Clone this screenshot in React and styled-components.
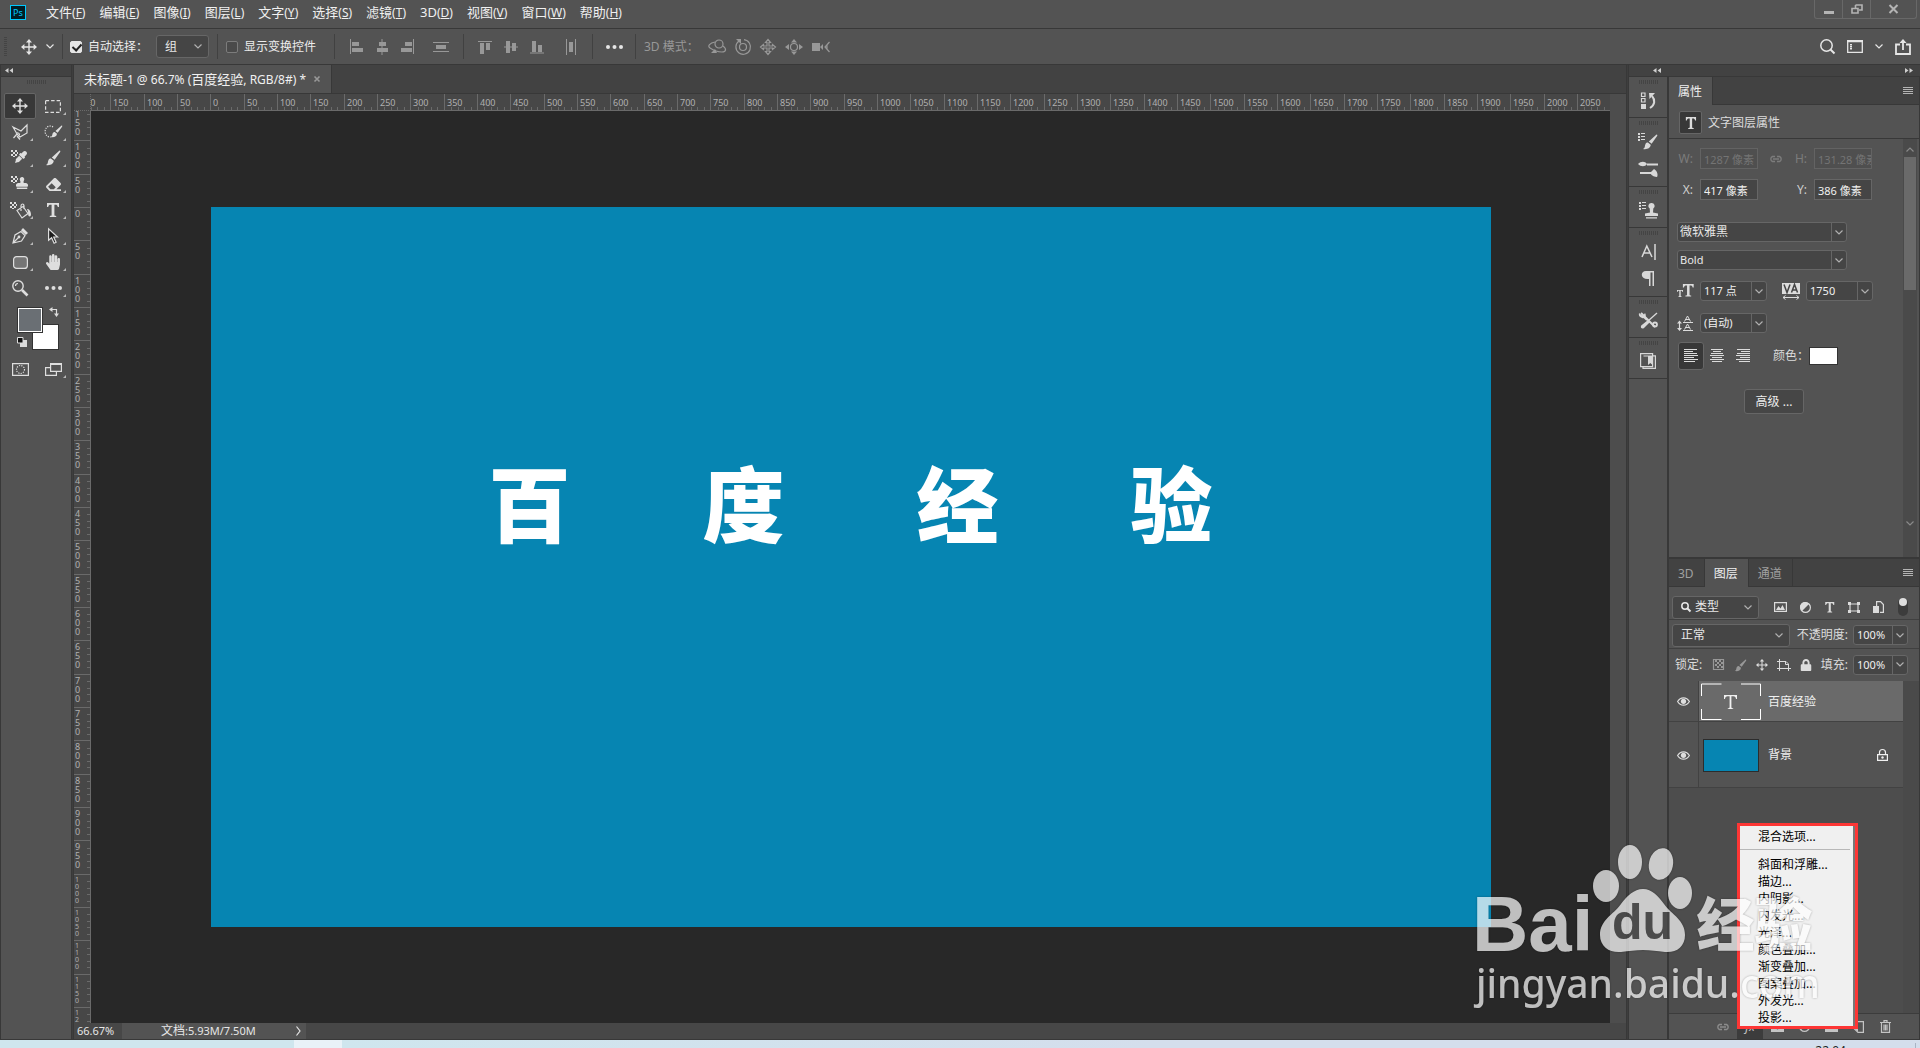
import React from 'react';
import styled, { createGlobalStyle, css } from 'styled-components';
import { FaHandPaper, FaEraser, FaEyeDropper, FaStamp, FaLock } from 'react-icons/fa';

const GlobalStyle = createGlobalStyle`
  * {
    box-sizing: border-box;
  }
  html, body, #root {
    height: 100%;
  }
  body {
    margin: 0;
    overflow: hidden;
    background: #535353;
    color: #dcdcdc;
    font: 12px/16px "Noto Sans", "Noto Sans CJK SC", sans-serif;
  }
  button, input, select {
    margin: 0;
    padding: 0;
    border: 0;
    color: inherit;
    font: inherit;
    background: none;
  }
  svg {
    display: block;
    flex: none;
  }
`;

const line = '#383838';

const Screen = styled.div`
  display: flex;
  flex-direction: column;
  height: 100vh;
  position: relative;
  overflow: hidden;
`;

const Glyph = styled.svg`
  width: ${({ $w }) => $w || 16}px;
  height: ${({ $h, $w }) => $h || $w || 16}px;
  fill: none;
  stroke: currentColor;
  stroke-width: 1.2;
  overflow: visible;

  .solid {
    fill: currentColor;
    stroke: none;
  }
`;

const Icon = ({ w = 16, h = w, children }) => (
  <Glyph $w={w} $h={h} viewBox={`0 0 ${w} ${h}`} aria-hidden='true'>
    {children}
  </Glyph>
);

const Chevron = () => (
  <Icon w={8} h={5}>
    <path d='M0.5 0.5l3.5 3.5 3.5-3.5' />
  </Icon>
);

/* ---------- menu bar ---------- */

const MenuBar = styled.header`
  display: flex;
  align-items: flex-start;
  height: 29px;
  padding-left: 10px;
  border-bottom: 1px solid ${line};
`;

const Logo = styled.div`
  display: grid;
  place-items: center;
  width: 16px;
  height: 15px;
  margin-top: 5px;
  border: 1px solid #00c8ff;
  background: #001d26;
  color: #00c8ff;
  font-size: 9px;
  line-height: 12px;
`;

const MenuList = styled.nav`
  display: flex;
  gap: 14px;
  margin: 2px auto 0 20px;
`;

const MenuItem = styled.button`
  color: #f0f0f0;
  font-size: 13px;
  line-height: 20px;
  white-space: nowrap;

  span {
    font-size: 12px;
  }
`;

const WindowButtons = styled.div`
  display: flex;
  margin-right: 3px;
  height: 19px;
  border: 1px solid #686868;
  border-top: 0;
  border-radius: 0 0 3px 3px;
  color: #b4b4b4;
`;

const WindowButton = styled.button`
  display: grid;
  place-items: center;
  width: ${({ $w }) => $w}px;

  & + & {
    border-left: 1px solid #686868;
  }
`;

/* ---------- options bar ---------- */

const OptionsBar = styled.div`
  display: flex;
  align-items: center;
  height: 36px;
  padding-left: 4px;
  border-bottom: 1px solid ${line};
`;

const Grip = styled.i`
  width: ${({ $tall }) => ($tall ? 3 : 19)}px;
  height: ${({ $tall }) => ($tall ? 20 : 4)}px;
  background: repeating-linear-gradient(
    ${({ $tall }) => ($tall ? '180deg' : '90deg')},
    #444 0 1px,
    transparent 1px 2px
  );
`;

const Separator = styled.i`
  width: 1px;
  height: 25px;
  background: #414141;
`;

const OptionGroup = styled.div`
  display: flex;
  align-items: center;
  justify-content: ${({ $align }) => $align || 'flex-start'};
  gap: ${({ $gap }) => $gap || 0}px;
  width: ${({ $w }) => $w}px;
  padding-left: ${({ $pad }) => $pad || 0}px;
  color: ${({ $dim }) => ($dim ? '#989898' : '#e6e6e6')};
`;

const BareButton = styled.button`
  display: grid;
  place-items: center;
  min-width: ${({ $w }) => $w || 14}px;
  height: ${({ $h }) => $h || 22}px;
  color: ${({ $dim }) => ($dim ? '#989898' : 'inherit')};
`;

const CheckLabel = styled.label`
  display: flex;
  align-items: center;
  gap: 6px;
  color: #ececec;
  white-space: nowrap;
`;

const Check = styled.input`
  appearance: none;
  width: 12px;
  height: 12px;
  border: 1px solid #7c7c7c;
  border-radius: 2px;
  background: #4a4a4a;

  &:checked {
    border-color: #e6e6e6;
    background: #e6e6e6;
  }
  &:checked::before {
    content: '';
    display: block;
    width: 4px;
    height: 7px;
    margin: 0 3px;
    border: solid #222;
    border-width: 0 2px 2px 0;
    transform: rotate(42deg);
  }
`;

const SelectShell = styled.div`
  display: grid;
  grid-template-columns: 1fr 20px;
  align-items: center;
  width: ${({ $w }) => $w}px;
  height: ${({ $h }) => $h || 20}px;
  border: 1px solid #666;
  border-radius: 3px;
  background: #454545;
  color: #e8e8e8;

  select {
    grid-area: 1 / 1 / 2 / 3;
    appearance: none;
    width: 100%;
    height: 100%;
    padding-left: ${({ $pad }) => $pad || 4}px;
    outline: 0;
    font-size: ${({ $small }) => ($small ? 11 : 12)}px;
  }
  > svg {
    grid-area: 1 / 2;
    justify-self: center;
    color: #b0b0b0;
    pointer-events: none;
  }
  ${({ $split }) =>
    $split &&
    css`
      grid-template-columns: 1fr 15px;
      &::after {
        content: '';
        grid-area: 1 / 2;
        height: 100%;
        border-left: 1px solid #666;
        pointer-events: none;
      }
    `}
`;

const Lens = styled.span`
  grid-area: 1 / 1;
  padding-left: 8px;
  pointer-events: none;
`;

const Select = ({ label, options, children, ...rest }) => (
  <SelectShell {...rest}>
    <select aria-label={label}>
      {options.map((option) => (
        <option key={option}>{option}</option>
      ))}
    </select>
    {children}
    <Chevron />
  </SelectShell>
);

const ComboShell = styled.div`
  display: flex;
  flex: none;
  width: ${({ $w }) => $w}px;
  height: 20px;
  border: 1px solid #666;
  border-radius: 3px;
  background: #454545;
  color: #f0f0f0;
  font-size: 11px;

  input {
    flex: 1;
    min-width: 0;
    padding-left: 3px;
    outline: 0;
  }
  button {
    display: grid;
    place-items: center;
    width: 15px;
    border-left: 1px solid #666;
    color: #b0b0b0;
  }
`;

const Combo = ({ label, value, w }) => (
  <ComboShell $w={w}>
    <input aria-label={label} defaultValue={value} />
    <button aria-label={`${label} ▾`}>
      <Chevron />
    </button>
  </ComboShell>
);

/* ---------- tools ---------- */

const Workspace = styled.main`
  display: flex;
  flex: 1;
  min-height: 0;
  border-left: 1px solid ${line};
  border-bottom: 1px solid ${line};
  background: #3e3e3e;
`;

const ToolColumn = styled.aside`
  width: 71px;
  margin-right: 1px;
  background: #535353;
  border-right: 1px solid ${line};
`;

const Collapse = styled.div`
  display: flex;
  align-items: center;
  justify-content: space-between;
  height: 12px;
  padding: ${({ $side }) => ($side ? '0 7px 0 24px' : '0 4px')};
  border-bottom: 1px solid ${line};
  background: #424242;
  color: #cfcfcf;
`;

const GripRow = styled.div`
  display: flex;
  justify-content: center;
  align-items: center;
  height: 10px;
`;

const ToolGrid = styled.div`
  display: grid;
  grid-template-columns: 32px 32px;
  grid-auto-rows: 26px;
  column-gap: 1px;
  padding: 6px 2px 0 3px;
`;

const Tool = styled.button`
  position: relative;
  display: grid;
  place-items: center;
  border-radius: 2px;
  color: #dedede;

  ${({ $active }) =>
    $active &&
    css`
      border: 1px solid #666;
      background: #383838;
    `}
  ${({ $more }) =>
    $more &&
    css`
      &::after {
        content: '';
        position: absolute;
        right: 3px;
        bottom: 4px;
        border: solid #b8b8b8;
        border-width: 0 0 3px 3px;
        border-left-color: transparent;
      }
    `}
`;

const Swatches = styled.div`
  display: grid;
  grid-template-columns: 15px 11px 16px;
  grid-template-rows: 17px 9px 17px;
  justify-content: center;
  margin: 6px 0 0 4px;
`;

const Swatch = styled.button`
  grid-area: ${({ $back }) => ($back ? '2 / 2 / 4 / 4' : '1 / 1 / 3 / 3')};
  z-index: ${({ $back }) => ($back ? 0 : 1)};
  border: 1px solid #333;
  background: ${({ $color }) => $color};
  box-shadow: ${({ $back }) => ($back ? 'none' : 'inset 0 0 0 1px #fff')};
`;

const SwapButton = styled(BareButton)`
  grid-area: 1 / 3;
  place-items: start end;
`;

const DefaultButton = styled(BareButton)`
  grid-area: 3 / 1;
  place-items: center start;
  height: 17px;
`;

const MoveArrows = () => (
  <Icon w={16}>
    <path d='M8 2v12M2 8h12' strokeWidth='1.4' />
    <path className='solid' d='M8 0l3 3.4H5zM8 16l3-3.4H5zM0 8l3.4-3v6zM16 8l-3.4-3v6z' />
  </Icon>
);

const Checker = () => (
  <path
    className='solid'
    d='M0 0h2v2h-2zM4 0h2v2h-2zM2 2h2v2h-2zM0 4h2v2h-2zM4 4h2v2h-2zM6 2h1v2h-1zM2 6h2v1h-2z'
  />
);

const BrushShape = () => (
  <path
    className='solid'
    d='M14.5 0.5c1 0 1 .8.6 1.6L9.6 9.8 6.8 7.6zM5.9 8.6l2.8 2.2c0 3.2-3.6 5-7.7 4.2 2.4-1.2 1.6-3 2.4-4.8.6-1.2 1.6-1.6 2.5-1.6z'
  />
);

const TypeShape = () => (
  <path
    className='solid'
    d='M1 0h12v4h-1.2c-.3-1.7-.9-2.3-2.6-2.3H8.4v10c0 .9.3 1.1 1.8 1.2V14H3.8v-1.1c1.5-.1 1.8-.3 1.8-1.2v-10H4.8C3.1 1.7 2.5 2.3 2.2 4H1z'
  />
);

const Dots = () => (
  <Icon w={17} h={4}>
    <g className='solid'>
      <circle cx='2' cy='2' r='2' />
      <circle cx='8.5' cy='2' r='2' />
      <circle cx='15' cy='2' r='2' />
    </g>
  </Icon>
);

const tools = [
  { label: '移动', active: true, art: <MoveArrows /> },
  {
    label: '选框',
    art: (
      <Icon w={16} h={13}>
        <rect x='0.6' y='0.6' width='14.8' height='11.8' strokeDasharray='3.5 2' />
      </Icon>
    ),
  },
  {
    label: '套索',
    art: (
      <Icon w={17}>
        <path d='M1 3l8 4 6-6v8l-7 4-3-3zM5 10l-3.5 4M5 12l3 3.5M4 9.5a2 1.5 0 1 1 3 2' />
      </Icon>
    ),
  },
  {
    label: '快速选择',
    art: (
      <Icon w={18} h={14}>
        <path d='M9 2A5 5.5 0 1 0 9 11' strokeDasharray='1.2 1.2' />
        <g transform='translate(6 0) scale(.8)'>
          <BrushShape />
        </g>
      </Icon>
    ),
  },
  {
    label: '吸管',
    art: (
      <Icon w={19} h={17}>
        <Checker />
        <FaEyeDropper x='4' y='1' width='15' height='15' stroke='none' />
      </Icon>
    ),
  },
  { label: '画笔', art: <Icon w={16}><BrushShape /></Icon> },
  {
    label: '图章',
    art: (
      <Icon w={19} h={16}>
        <Checker />
        <FaStamp x='5' y='1' width='14' height='15' stroke='none' />
      </Icon>
    ),
  },
  { label: '橡皮擦', art: <FaEraser size={15} /> },
  {
    label: '油漆桶',
    art: (
      <Icon w={21} h={17}>
        <Checker />
        <path d='M7 8.5l6-4 5 7-6 4.5zM11 9V4a1.5 2 0 0 1 3 0v3' />
        <path className='solid' d='M17 7c2 0 4 2 4 5.5a1.4 2 0 0 1-2.8 0c0-2-.2-3.5-1.2-5.5z' />
      </Icon>
    ),
  },
  { label: '文字', art: <Icon w={14}><TypeShape /></Icon> },
  {
    label: '钢笔',
    art: (
      <Icon w={16}>
        <path d='M1 15l2-8 6-3.5 4 4L9.5 13zM1 15l5.5-5.5' />
        <circle className='solid' cx='7' cy='9' r='1.4' />
        <path className='solid' d='M9 2.2L11 0l5 5-2.2 2z' />
      </Icon>
    ),
  },
  {
    label: '路径选择',
    art: (
      <Icon w={10} h={16}>
        <path d='M0.6 0.8v11.5l3-2.5 2.5 5.4 2-1-2.4-5.2h3.8z' fill='#1c1c1c' />
      </Icon>
    ),
  },
  {
    label: '圆角矩形',
    art: (
      <Icon w={15} h={13}>
        <rect x='0.6' y='0.6' width='13.8' height='11.8' rx='3' fill='#757575' />
      </Icon>
    ),
  },
  { label: '抓手', art: <FaHandPaper size={16} /> },
  {
    label: '缩放',
    plain: true,
    art: (
      <Icon w={16}>
        <circle cx='6' cy='6' r='5.2' strokeWidth='1.4' />
        <path d='M3.5 6a2.5 2.5 0 0 1 2.5-2.5' />
        <path d='M10 10l5.5 5.5' strokeWidth='2.6' />
      </Icon>
    ),
  },
  { label: '编辑工具栏', art: <Dots /> },
];

/* ---------- document ---------- */

const Document = styled.section`
  display: flex;
  flex: 1;
  flex-direction: column;
  min-width: 0;
  border-left: 1px solid ${line};
  border-right: 1px solid ${line};
`;

const TabBar = styled.div`
  display: flex;
  height: 29px;
  border-bottom: 1px solid ${line};
  background: #424242;
`;

const DocumentTab = styled.div`
  display: flex;
  align-items: center;
  gap: 7px;
  padding: 0 10px;
  border-right: 1px solid ${line};
  background: #535353;
  color: #f0f0f0;
  font-size: 13px;
  white-space: nowrap;

  span span {
    font-size: 12px;
  }
`;

const Stage = styled.div`
  display: grid;
  flex: 1;
  grid-template: 17px 1fr / 17px 1fr 16px;
  min-height: 0;
  background: #4d4d4d;
`;

const Corner = styled.div`
  border-right: 1px dotted #6a6a6a;
  border-bottom: 1px dotted #6a6a6a;
  background: #474747;
`;

const Ruler = styled.div`
  display: flex;
  flex-direction: ${({ $vertical }) => ($vertical ? 'column' : 'row')};
  overflow: hidden;
  border: solid #6a6a6a;
  border-width: ${({ $vertical }) => ($vertical ? '0 1px 0 0' : '0 0 1px')};
  background: #474747;
  color: #b0b0b0;
`;

const Mark = styled.div`
  display: flex;
  flex: none;
  flex-direction: ${({ $vertical }) => ($vertical ? 'row' : 'column')};
  justify-content: space-between;
  width: ${({ $vertical, $size }) => ($vertical ? 'auto' : `${$size}px`)};
  height: ${({ $vertical, $size }) => ($vertical ? `${$size}px` : 'auto')};
  border: solid #6a6a6a;
  border-width: ${({ $vertical }) => ($vertical ? '1px 0 0' : '0 0 0 1px')};

  &:first-child {
    margin: ${({ $vertical }) => ($vertical ? '-4px 0 0' : '0 0 0 -14px')};
  }
`;

const MarkLabel = styled.span`
  height: 13px;
  padding-left: 2px;
  font-size: ${({ $small }) => ($small ? 7 : 9)}px;
  line-height: 17px;

  ${({ $vertical, $small }) =>
    $vertical &&
    css`
      display: flex;
      flex-direction: column;
      height: auto;
      padding: 1px 0 0 1px;
      line-height: ${$small ? 7 : 9}px;
    `}
`;

const Ticks = styled.span`
  display: flex;
  flex-direction: ${({ $vertical }) => ($vertical ? 'column' : 'row')};
  ${({ $vertical }) => ($vertical ? 'width: 3px' : 'height: 3px')};

  i {
    flex: 1;
    border: solid #6a6a6a;
    border-width: ${({ $vertical }) => ($vertical ? '1px 0 0' : '0 0 0 1px')};
  }
  i:first-child {
    border-color: transparent;
  }
`;

const Pasteboard = styled.div`
  display: flex;
  align-items: center;
  justify-content: center;
  overflow: hidden;
  background: #282828;
`;

const Artboard = styled.div`
  display: flex;
  flex: none;
  justify-content: center;
  gap: 132px;
  width: 1280px;
  height: 720px;
  padding-top: 238px;
  background: #0685b2;
  color: #fff;
  font: 900 82px/112px "Noto Sans CJK SC", sans-serif;
`;

const StatusBar = styled.footer`
  display: flex;
  height: 16px;
  background: #474747;
  color: #e6e6e6;
  font-size: 11px;
`;

const Zoom = styled.input`
  width: 48px;
  padding-left: 3px;
`;

const DocInfo = styled.button`
  display: flex;
  align-items: center;
  justify-content: space-between;
  width: 184px;
  padding: 0 5px 0 39px;
  background: #535353;

  span {
    font-size: 12px;
  }
`;

const units = (from, count) =>
  Array.from({ length: count }, (_, i) => ({
    label: String(Math.abs(from + i * 50)),
    size: Math.round(((i + 1) * 100) / 3) - Math.round((i * 100) / 3),
  }));

const RulerScale = ({ from, count, vertical }) => (
  <Ruler $vertical={vertical}>
    {units(from, count).map(({ label, size }, i) => {
      const small = vertical && label.length > 3;
      return (
        <Mark key={i} $vertical={vertical} $size={size}>
          <MarkLabel $vertical={vertical} $small={small}>
            {vertical ? [...label].map((digit, n) => <span key={n}>{digit}</span>) : label}
          </MarkLabel>
          <Ticks $vertical={vertical}>
            <i /><i /><i /><i /><i />
          </Ticks>
        </Mark>
      );
    })}
  </Ruler>
);

/* ---------- side docks ---------- */

const Side = styled.aside`
  display: flex;
  flex: none;
  flex-direction: column;
  width: 292px;
  margin-left: 1px;
  border-left: 1px solid ${line};
`;

const SideBody = styled.div`
  display: flex;
  flex: 1;
  gap: 2px;
  min-height: 0;
  background: ${line};
`;

const IconDock = styled.div`
  flex: none;
  width: 38px;
  background: #535353;
`;

const DockGroup = styled.div`
  display: flex;
  flex-direction: column;
  align-items: center;
  padding-bottom: 4px;
  border-bottom: 1px solid ${line};
  color: #d8d8d8;
`;

const Panels = styled.div`
  display: flex;
  flex: 1;
  flex-direction: column;
  gap: 2px;
  min-width: 0;
  padding-right: 1px;
`;

const Panel = styled.section`
  display: flex;
  flex: 1;
  flex-direction: column;
  min-height: 0;
  position: relative;
  background: #535353;
`;

const PanelTabs = styled.div`
  display: flex;
  align-items: center;
  height: 28px;
  padding-right: 4px;
  box-shadow: inset 0 -1px ${line};
  background: #424242;
`;

const PanelTab = styled.button`
  height: 28px;
  padding: 1px 10px 0 9px;
  border-right: 1px solid ${line};
  background: ${({ $active }) => ($active ? '#535353' : 'transparent')};
  color: ${({ $active }) => ($active ? '#f0f0f0' : '#a0a0a0')};
`;

const PanelMenu = styled(BareButton)`
  margin-left: auto;
  color: #b4b4b4;
`;

const PanelTitle = styled.div`
  display: flex;
  align-items: center;
  gap: 6px;
  height: 34px;
  padding: 2px 0 0 10px;
  border-bottom: 1px solid ${line};
`;

const TypeBadge = styled.div`
  display: grid;
  place-items: center;
  width: 23px;
  height: 23px;
  border: 1px solid #666;
  border-radius: 2px;
  background: #383838;
`;

const Scrolled = styled.div`
  display: flex;
  flex: 1;
  min-height: 0;
`;

const ScrollBar = styled.div`
  display: flex;
  flex: none;
  flex-direction: column;
  align-items: center;
  width: 14px;
  margin-right: 2px;
  padding: 8px 0 31px;
  background: #4a4a4a;
  color: #8a8a8a;

  i {
    width: 12px;
    height: 133px;
    margin: 5px 0 auto;
    background: #6a6a6a;
  }
`;

const Form = styled.div`
  flex: 1;
  min-width: 0;
  padding-top: 9px;
`;

const SizeRow = styled.div`
  display: grid;
  grid-template-columns: 24px 58px 18px 17px 58px;
  column-gap: 7px;
  align-items: center;
  justify-items: end;
  margin-bottom: 10px;
  color: ${({ $disabled }) => ($disabled ? '#7c7c7c' : '#cfcfcf')};
`;

const SizeInput = styled.input`
  width: 58px;
  height: 21px;
  padding-left: 3px;
  border: 1px solid #666;
  background: #454545;
  color: #f0f0f0;
  font-size: 11px;

  &:disabled {
    border-color: #636363;
    background: #4f4f4f;
    color: #747474;
  }
`;

const FormRow = styled.div`
  display: flex;
  align-items: center;
  gap: ${({ $gap }) => $gap ?? 6}px;
  margin-top: ${({ $top }) => $top}px;
  padding-left: ${({ $indent }) => $indent || 8}px;
`;

const FormIcon = styled.span`
  display: grid;
  justify-items: ${({ $end }) => ($end ? 'end' : 'start')};
  width: ${({ $end }) => ($end ? 27 : 17)}px;
`;

const AlignButton = styled(BareButton)`
  min-width: 26px;
  height: 28px;
  border-radius: 3px;
  ${({ $active }) => $active && 'border: 1px solid #666; background: #383838;'}
`;

const ColorLabel = styled.span`
  margin-left: 17px;
`;

const ColorButton = styled.button`
  width: 29px;
  height: 18px;
  border: 1px solid #333;
  background: #fff;
`;

const Advanced = styled.button`
  width: 60px;
  height: 25px;
  border: 1px solid #666;
  border-radius: 3px;
  background: #464646;
  color: #ececec;
`;

/* ---------- layers ---------- */

const LayerBar = styled.div`
  display: flex;
  align-items: center;
  gap: ${({ $gap }) => $gap || 5}px;
  height: ${({ $h }) => $h}px;
  padding: ${({ $top }) => $top || 0}px 11px 0 ${({ $last }) => ($last ? 6 : 3)}px;
  border-bottom: 1px solid ${({ $last }) => ($last ? 'transparent' : '#404040')};
  white-space: nowrap;
`;

const FilterIcons = styled.div`
  display: flex;
  flex: 1;
  align-items: center;
  justify-content: space-between;
  padding: 0 6px 0 7px;
`;

const Toggle = styled.button`
  display: flex;
  justify-content: center;
  width: 10px;
  height: 18px;
  border-radius: 5px;
  background: #3c3c3c;

  &::before {
    content: '';
    width: 8px;
    height: 8px;
    border-radius: 4px;
    background: #dedede;
  }
`;

const LockIcons = styled.div`
  display: flex;
  flex: 1;
  justify-content: space-between;
  padding: 0 3px 0 4px;
`;

const Push = styled.span`
  margin-left: auto;
`;

const LayerList = styled.div`
  flex: 1;
  min-width: 0;
  background: #4d4d4d;
`;

const Layer = styled.div`
  display: grid;
  grid-template-columns: 29px 62px 1fr 26px;
  column-gap: 1px;
  align-items: center;
  height: ${({ $h }) => $h}px;
  padding-top: 1px;
  border-bottom: 1px solid #424242;
  background: linear-gradient(
    90deg,
    #535353 29px,
    #424242 29px 30px,
    ${({ $active }) => ($active ? '#6a6a6a' : '#535353')} 30px
  );
  color: #f0f0f0;
`;

const Eye = styled(BareButton)`
  color: #dedede;
`;

const ColorThumb = styled.div`
  width: 56px;
  height: 33px;
  margin-left: 4px;
  border: 1px solid #2c2c2c;
  background: #0685b2;
`;

const LayerName = styled.span`
  padding-left: 6px;
`;

const ListEdge = styled.div`
  width: 16px;
  background: #4a4a4a;
`;

const LayerFooter = styled.div`
  display: flex;
  align-items: center;
  justify-content: flex-end;
  gap: 1px;
  height: 26px;
  padding-right: 21px;
  border-top: 1px solid #3c3c3c;
  color: #c4c4c4;
`;

const FooterButton = styled(BareButton)`
  min-width: 26px;
  height: 25px;
  color: ${({ $dim }) => ($dim ? '#8c8c8c' : 'inherit')};
  background: ${({ $active }) => ($active ? '#3c3c3c' : 'none')};
`;

const EffectMenu = styled.div`
  position: absolute;
  right: 61px;
  bottom: 10px;
  width: 121px;
  padding: 0 5px 0 18px;
  border: 3px solid #fd3635;
  background: #f0f0f0;
  box-shadow: inset -2px 0 #777;
  color: #000;
`;

const EffectItem = styled.button`
  display: block;
  width: 100%;
  height: ${({ $first }) => ($first ? 20 : 17)}px;
  text-align: left;
  line-height: 17px;
  white-space: nowrap;
`;

const EffectRule = styled.hr`
  margin: 3px 0 6px -18px;
  border: 0;
  border-top: 1px solid #b8b8b8;
`;

/* ---------- taskbar and watermark ---------- */

const TaskBar = styled.div`
  display: flex;
  align-items: flex-start;
  justify-content: flex-end;
  height: 8px;
  overflow: hidden;
  background: linear-gradient(90deg, #cfe6ee 0 294px, #e9f2f8 294px 342px, #cfe6ee 342px, #d4deec 60%);
  color: #222;

  time {
    margin: 3px 4px 0 0;
    padding-right: 69px;
    border-right: 1px solid #a9b4c4;
  }
`;

const Watermark = styled.div`
  position: absolute;
  right: 100px;
  bottom: 37px;
  width: 348px;
  color: #fff;
  opacity: 0.7;
  pointer-events: none;
  filter: drop-shadow(0 0 1px rgba(0, 0, 0, 0.4));
`;

const WatermarkTop = styled.div`
  display: flex;
  align-items: flex-end;
  height: 108px;
  white-space: nowrap;

  strong {
    font: bold 78px/62px "Liberation Sans", sans-serif;
  }
  b {
    margin-left: 3px;
    font: 900 58px/68px "Noto Sans CJK SC", sans-serif;
  }
`;

const WatermarkUrl = styled.div`
  padding-left: 4px;
  font: 500 39px/56px "Noto Sans", sans-serif;
`;

const Paw = styled.svg`
  width: 100px;
  height: 110px;
  fill: #fff;

  text {
    fill: #4a4a4a;
    font: bold 50px "Liberation Sans", sans-serif;
  }
`;

const menus = [
  ['文件', 'F'], ['编辑', 'E'], ['图像', 'I'], ['图层', 'L'], ['文字', 'Y'], ['选择', 'S'],
  ['滤镜', 'T'], ['3D', 'D'], ['视图', 'V'], ['窗口', 'W'], ['帮助', 'H'],
];

const effects = [
  '斜面和浮雕...', '描边...', '内阴影...', '内发光...', '光泽...',
  '颜色叠加...', '渐变叠加...', '图案叠加...', '外发光...', '投影...',
];

const DoubleArrow = ({ flip }) => (
  <Icon w={8} h={5}>
    <path className='solid' d={flip ? 'M0 0l3.5 2.5L0 5zM4.5 0L8 2.5 4.5 5z' : 'M3.5 0v5L0 2.5zM8 0v5L4.5 2.5z'} />
  </Icon>
);

const Hamburger = () => (
  <Icon w={10} h={8}>
    <path d='M0 .5h10M0 2.5h10M0 4.5h10M0 6.5h10' strokeWidth='1' />
  </Icon>
);

const TextLines = ({ d }) => (
  <Icon w={14} h={14}>
    <path d={d} strokeWidth='1' />
  </Icon>
);

const LinkIcon = () => (
  <Icon w={14} h={8}>
    <path d='M6 6.5H3.5a2.7 2.7 0 0 1 0-5H6M8 1.5h2.5a2.7 2.7 0 0 1 0 5H8M4 4h6' strokeWidth='1.4' />
  </Icon>
);

const ListDots = () => <path className='solid' d='M0 0h2v2H0zM0 3h2v2H0zM0 6h2v2H0zM3 0h4v1H3zM3 3h4v1H3zM3 6h4v1H3z' />;

const EyeIcon = () => (
  <Icon w={13} h={9}>
    <path d='M.6 4.5C3.5-.4 9.5-.4 12.4 4.5 9.5 9.4 3.5 9.4.6 4.5z' />
    <circle className='solid' cx='6.5' cy='4.3' r='2.6' />
  </Icon>
);

const dockGroups = [
  [
    <Icon w={15} h={17}>
      <path d='M.5 1h3.5v3.5H.5zM.5 6.5h3.5V10H.5z' />
      <path className='solid' d='M0 12h5v5H0zM8 1h6l-5.5 6z' />
      <path d='M9 16c5-3 5.5-8 2-12' strokeWidth='2' />
    </Icon>,
  ],
  [
    <Icon w={20} h={17}>
      <ListDots />
      <g transform='translate(4 1)'><BrushShape /></g>
    </Icon>,
    <Icon w={20} h={16}>
      <path className='solid' d='M0 3c3-3 7-3 9 0-2 3-6 3-9 0zM12 12l4-4c4 2 4 7 3 8-2 0-5-1-7-4z' />
      <path d='M9 3.5h11M2 12h11' strokeWidth='1.8' />
    </Icon>,
  ],
  [
    <Icon w={19} h={17}>
      <ListDots />
      <path className='solid' d='M12.5 1a3 3 0 0 1 1.8 5.5l-.3 4 5 1V14H6v-2.5l5-1-.3-4A3 3 0 0 1 12.5 1zM7 15.3h11v1.2H7z' />
    </Icon>,
  ],
  [
    <Icon w={15} h={16}>
      <path d='M1 13L5.8 2 11 13M3 9h6M14 0v16' strokeWidth='1.5' />
    </Icon>,
    <Icon w={12} h={15}>
      <path className='solid' d='M12 0v15h-1.5V1.5H8.5V15H7V8C-2 9-2 0 4 0z' />
    </Icon>,
  ],
  [
    <Icon w={19} h={17}>
      <path d='M2 1l6 6 8 8M3.5 3.5L8 8' strokeWidth='2' />
      <path d='M18 1l-9 8' strokeWidth='1.4' />
      <path className='solid' d='M9 8l2 2-6 6c-2 1.5-4-.5-2.8-2.6zM0 1l4 3 2-3c2 3 0 6-3 5S-.5 3 0 1z' />
      <circle cx='16' cy='12.5' r='2' strokeWidth='1.8' />
    </Icon>,
  ],
  [
    <Icon w={16} h={16}>
      <path d='M.6.6h12v13h-12zM3 14v1.4h12.4V2.8H13M3.5 3h9' />
      <path className='solid' d='M8 3h4.5v9l-2.2-2-2.3 2z' />
    </Icon>,
  ],
];

const App = () => (
  <>
    <GlobalStyle />
    <Screen>
      <MenuBar>
        <Logo>Ps</Logo>
        <MenuList>
          {menus.map(([name, key]) => (
            <MenuItem key={name}>
              {name}<span>(<u>{key}</u>)</span>
            </MenuItem>
          ))}
        </MenuList>
        <WindowButtons>
          <WindowButton $w={27} aria-label='最小化'>
            <Icon w={10} h={10}><path className='solid' d='M0 7h10v3H0z' /></Icon>
          </WindowButton>
          <WindowButton $w={28} aria-label='还原'>
            <Icon w={12} h={10}><path d='M4.5 1h6.5v5H8M1 4.5h6V9H1zM4.5 1v3' strokeWidth='1.6' /></Icon>
          </WindowButton>
          <WindowButton $w={46} aria-label='关闭'>
            <Icon w={9} h={8}><path d='M.5 0l8 8M8.5 0l-8 8' strokeWidth='2' /></Icon>
          </WindowButton>
        </WindowButtons>
      </MenuBar>

      <OptionsBar>
        <Grip $tall />
        <OptionGroup $w={55} $pad={14} $gap={9}>
          <MoveArrows />
          <Chevron />
        </OptionGroup>
        <Separator />
        <OptionGroup $w={154} $pad={7} $gap={8}>
          <CheckLabel>
            <Check type='checkbox' defaultChecked />
            自动选择：
          </CheckLabel>
          <Select label='自动选择' options={['组', '图层']} $w={53} $h={23} $pad={8} />
        </OptionGroup>
        <Separator />
        <OptionGroup $w={116} $pad={8}>
          <CheckLabel>
            <Check type='checkbox' />
            显示变换控件
          </CheckLabel>
        </OptionGroup>
        <Separator />
        <OptionGroup $w={128} $pad={15} $gap={11} $dim>
          <BareButton aria-label='左对齐'>
            <Icon w={14} h={15}><path d='M.5 0v15' strokeWidth='1' /><path className='solid' d='M2 3h7v4H2zM2 9h11v4H2z' /></Icon>
          </BareButton>
          <BareButton aria-label='水平居中'>
            <Icon w={12} h={16}><path d='M6 0v16' strokeWidth='1' /><path className='solid' d='M3 3h7v4H3zM1 9h11v4H1z' /></Icon>
          </BareButton>
          <BareButton aria-label='右对齐'>
            <Icon w={14} h={15}><path d='M13.5 0v15' strokeWidth='1' /><path className='solid' d='M5 3h7v4H5zM1 9h11v4H1z' /></Icon>
          </BareButton>
          <BareButton $w={32} aria-label='垂直分布'>
            <Icon w={16} h={10}><path d='M0 .5h16M0 9.5h16' strokeWidth='1' /><path className='solid' d='M3 3h10v4H3z' /></Icon>
          </BareButton>
        </OptionGroup>
        <Separator />
        <OptionGroup $w={128} $pad={14} $gap={12} $dim>
          <BareButton aria-label='顶对齐'>
            <Icon w={14} h={14}><path d='M0 1.5h14' strokeWidth='1' /><path className='solid' d='M2 3h4v11H2zM8 3h4v7H8z' /></Icon>
          </BareButton>
          <BareButton aria-label='垂直居中'>
            <Icon w={14} h={12}><path d='M0 6h14' strokeWidth='1' /><path className='solid' d='M2 0h4v12H2zM8 2h4v8H8z' /></Icon>
          </BareButton>
          <BareButton aria-label='底对齐'>
            <Icon w={14} h={14}><path d='M0 13h14' strokeWidth='1' /><path className='solid' d='M2 1h4v11H2zM8 5h4v7H8z' /></Icon>
          </BareButton>
          <BareButton $w={30} aria-label='水平分布'>
            <Icon w={10} h={16}><path d='M.5 0v16M9.5 0v16' strokeWidth='1' /><path className='solid' d='M3 3h4v10H3z' /></Icon>
          </BareButton>
        </OptionGroup>
        <Separator />
        <OptionGroup $w={42} $align='center'>
          <BareButton aria-label='更多'><Dots /></BareButton>
        </OptionGroup>
        <Separator />
        <OptionGroup $w={200} $pad={8} $gap={9} $dim>
          <span>3D 模式：</span>
          <Icon w={18} h={17}>
            <circle cx='11' cy='6' r='4' />
            <path d='M7 4C2 5-1 8 2 10s8 4 12 4 5-3 1-6' />
            <path className='solid' d='M3 15l4-4 2 4z' />
          </Icon>
          <Icon w={16} h={16}>
            <path d='M4 2a7.3 7.3 0 1 0 5-1.3' />
            <circle cx='8' cy='8' r='3.5' />
            <path className='solid' d='M1 0h5v5z' />
          </Icon>
          <Icon w={16} h={16}>
            <path d='M8 .5l2.5 3H9v3.5h3.5V5.5l3 2.5-3 2.5V9H9v3.5h1.5L8 15.5l-2.5-3H7V9H3.5v1.5L.5 8l3-2.5V7H7V3.5H5.5z' />
          </Icon>
          <Icon w={18} h={16}>
            <circle cx='9' cy='8' r='3.5' />
            <path className='solid' d='M9 0l3 3.5H6zM9 16l3-3.5H6zM0 8l4-3v6zM18 8l-4-3v6z' />
          </Icon>
          <Icon w={18} h={10}>
            <path className='solid' d='M0 1h8v8H0zM8 5l3-3v6z' />
            <path d='M17.5 0L13 5l4.5 5M15 2.5v5' />
          </Icon>
        </OptionGroup>
        <Push />
        <OptionGroup $w={101} $gap={12}>
          <BareButton $w={16} aria-label='搜索'>
            <Icon w={15} h={15}><circle cx='6.5' cy='6.5' r='5.7' strokeWidth='1.5' /><path d='M10.5 10.5l4 4' strokeWidth='2' /></Icon>
          </BareButton>
          <BareButton $w={16} aria-label='工作区'>
            <Icon w={16} h={13}><path d='M.7 1.5h14.6v10.8H.7z' strokeWidth='1.3' /><path className='solid' d='M0 0h16v2H0zM3 4h2v1.5H3zM3 6h2v1.5H3zM3 8h2v1.5H3z' /></Icon>
          </BareButton>
          <Chevron />
          <BareButton $w={16} aria-label='共享'>
            <Icon w={16} h={16}><path d='M5 5.5H1v9.5h14V5.5h-4M8 11V2' strokeWidth='1.8' /><path className='solid' d='M8 0l3.5 4h-7z' /></Icon>
          </BareButton>
        </OptionGroup>
      </OptionsBar>

      <Workspace>
        <ToolColumn>
          <Collapse><DoubleArrow /></Collapse>
          <GripRow><Grip /></GripRow>
          <ToolGrid>
            {tools.map(({ label, active, plain, art }) => (
              <Tool key={label} aria-label={label} $active={active} $more={!active && !plain}>
                {art}
              </Tool>
            ))}
          </ToolGrid>
          <Swatches>
            <Swatch $color='#6a6f74' aria-label='前景色' />
            <Swatch $back $color='#fff' aria-label='背景色' />
            <SwapButton aria-label='切换颜色'>
              <Icon w={10} h={10}><path d='M3 2.5h4.5V7' /><path className='solid' d='M0 2.5L3.5 0v5zM7.5 10L5 6.5h5z' /></Icon>
            </SwapButton>
            <DefaultButton aria-label='默认颜色'>
              <Icon w={10} h={10}><path className='solid' d='M3 3h7v7H3z' /><path d='M.5.5h5.5v5.5H.5z' fill='#111' strokeWidth='1' /></Icon>
            </DefaultButton>
          </Swatches>
          <ToolGrid>
            <Tool aria-label='快速蒙版'>
              <Icon w={17} h={13}><path d='M.6.6h15.8v11.8H.6z' /><circle cx='8.5' cy='6.5' r='4' strokeDasharray='1.2 1.2' /></Icon>
            </Tool>
            <Tool $more aria-label='屏幕模式'>
              <Icon w={17} h={13}><path d='M5.6.6h10.8v7.8H5.6zM5 4.6H.6v7.8h10.8V9' /><path className='solid' d='M5 0h12v2H5z' /></Icon>
            </Tool>
          </ToolGrid>
        </ToolColumn>

        <Document>
          <TabBar>
            <DocumentTab>
              <span>未标题<span>-1 @ 66.7% (</span>百度经验<span>, RGB/8#) *</span></span>
              <BareButton $w={8} $dim aria-label='关闭文档'>
                <Icon w={6} h={6}><path d='M.5.5l5 5M5.5.5l-5 5' strokeWidth='1.6' /></Icon>
              </BareButton>
            </DocumentTab>
          </TabBar>
          <Stage>
            <Corner />
            <RulerScale from={-200} count={46} />
            <span />
            <RulerScale from={-150} count={28} vertical />
            <Pasteboard>
              <Artboard>
                <span>百</span><span>度</span><span>经</span><span>验</span>
              </Artboard>
            </Pasteboard>
          </Stage>
          <StatusBar>
            <Zoom aria-label='缩放比例' defaultValue='66.67%' />
            <DocInfo>
              <div><span>文档</span>:5.93M/7.50M</div>
              <Icon w={5} h={10}><path d='M.5.5l3.5 4.5-3.5 4.5' /></Icon>
            </DocInfo>
          </StatusBar>
        </Document>

        <Side>
          <Collapse $side><DoubleArrow /><DoubleArrow flip /></Collapse>
          <SideBody>
            <IconDock>
              {dockGroups.map((icons, i) => (
                <DockGroup key={i}>
                  <GripRow><Grip /></GripRow>
                  {icons.map((art, n) => (
                    <BareButton key={n} $w={28} $h={icons.length > 1 ? 27 : 26} aria-label={`面板 ${i + 1}.${n + 1}`}>
                      {art}
                    </BareButton>
                  ))}
                </DockGroup>
              ))}
            </IconDock>

            <Panels>
              <Panel>
                <PanelTabs>
                  <PanelTab $active>属性</PanelTab>
                  <PanelMenu aria-label='属性菜单'><Hamburger /></PanelMenu>
                </PanelTabs>
                <PanelTitle>
                  <TypeBadge><Icon w={12} h={12}><g transform='scale(.85)'><TypeShape /></g></Icon></TypeBadge>
                  文字图层属性
                </PanelTitle>
                <Scrolled>
                  <Form>
                    <SizeRow $disabled>
                      <label htmlFor='w'>W:</label>
                      <SizeInput id='w' disabled defaultValue='1287 像素' />
                      <LinkIcon />
                      <label htmlFor='h'>H:</label>
                      <SizeInput id='h' disabled defaultValue='131.28 像素' />
                    </SizeRow>
                    <SizeRow>
                      <label htmlFor='x'>X:</label>
                      <SizeInput id='x' defaultValue='417 像素' />
                      <span />
                      <label htmlFor='y'>Y:</label>
                      <SizeInput id='y' defaultValue='386 像素' />
                    </SizeRow>
                    <FormRow $top={22}>
                      <Select label='字体' options={['微软雅黑', '宋体']} $w={170} $pad={2} $split />
                    </FormRow>
                    <FormRow $top={8}>
                      <Select label='字体样式' options={['Bold', 'Regular']} $w={170} $pad={2} $split $small />
                    </FormRow>
                    <FormRow $top={11}>
                      <FormIcon>
                        <Icon w={17} h={14}>
                          <g transform='translate(5 0) scale(.9)'><TypeShape /></g>
                          <g transform='translate(-.5 6) scale(.5)'><TypeShape /></g>
                        </Icon>
                      </FormIcon>
                      <Combo label='字号' value='117 点' w={67} />
                      <FormIcon $end>
                        <Icon w={18} h={17}>
                          <path className='solid' d='M0 0h18v11H0z' />
                          <path d='M2 1.5l3 8 3-8M9.5 9.5l3-8 3 8M10.5 7h4' stroke='#444' strokeWidth='1.5' />
                          <path d='M1 14.5h16M3.5 12.5l-2.5 2 2.5 2M14.5 12.5l2.5 2-2.5 2' strokeWidth='1' />
                        </Icon>
                      </FormIcon>
                      <Combo label='字距' value='1750' w={67} />
                    </FormRow>
                    <FormRow $top={12}>
                      <FormIcon>
                        <Icon w={16} h={16}>
                          <path d='M7.5 6.5l3-5.5 3 5.5M8.5 4.5h4M7.5 14.5l3-5.5 3 5.5M8.5 12.5h4M6 7.5h10M6 15.5h10' strokeWidth='1' />
                          <path d='M2.5 7v7' />
                          <path className='solid' d='M2.5 5.5L5 8.5H0zM2.5 16L5 13H0z' />
                        </Icon>
                      </FormIcon>
                      <Combo label='行距' value='(自动)' w={67} />
                    </FormRow>
                    <FormRow $top={9} $gap={0} $indent={9}>
                      <AlignButton $active aria-label='左对齐文本'>
                        <TextLines d='M0 .5h13M0 2.5h9M0 4.5h13M0 6.5h14M0 8.5h10M0 10.5h14M0 12.5h11' />
                      </AlignButton>
                      <AlignButton aria-label='居中对齐文本'>
                        <TextLines d='M1 .5h12M3 2.5h8M1 4.5h12M0 6.5h14M2 8.5h10M0 10.5h14M2 12.5h10' />
                      </AlignButton>
                      <AlignButton aria-label='右对齐文本'>
                        <TextLines d='M1 .5h13M5 2.5h9M1 4.5h13M0 6.5h14M4 8.5h10M0 10.5h14M3 12.5h11' />
                      </AlignButton>
                      <ColorLabel>颜色：</ColorLabel>
                      <ColorButton aria-label='颜色' />
                    </FormRow>
                    <FormRow $top={19} $indent={75}>
                      <Advanced>高级 ...</Advanced>
                    </FormRow>
                  </Form>
                  <ScrollBar>
                    <Icon w={8} h={5}><path d='M.5 4.5L4 1l3.5 3.5' /></Icon>
                    <i />
                    <Chevron />
                  </ScrollBar>
                </Scrolled>
              </Panel>

              <Panel>
                <PanelTabs>
                  <PanelTab>3D</PanelTab>
                  <PanelTab $active>图层</PanelTab>
                  <PanelTab>通道</PanelTab>
                  <PanelMenu aria-label='图层菜单'><Hamburger /></PanelMenu>
                </PanelTabs>
                <LayerBar $h={33} $top={8} $gap={8}>
                  <Select label='过滤' options={['类型', '名称']} $w={87} $h={23} $pad={22}>
                    <Lens>
                      <Icon w={10} h={10}><circle cx='4' cy='4' r='3.2' strokeWidth='1.5' /><path d='M6.5 6.5l3 3' strokeWidth='2' /></Icon>
                    </Lens>
                  </Select>
                  <FilterIcons>
                    <Icon w={13} h={10}><path d='M.6.6h11.8v8.8H.6z' /><path className='solid' d='M2 8l2.5-4 2 2.5L8.5 3l2.5 5z' /></Icon>
                    <Icon w={11} h={11}><circle cx='5.5' cy='5.5' r='4.9' /><path className='solid' d='M9 2A5 5 0 1 0 2 9z' /></Icon>
                    <Icon w={10} h={10}><g transform='translate(-.5 0) scale(.75)'><TypeShape /></g></Icon>
                    <Icon w={12} h={11}><path d='M2 2h8v7H2z' /><path className='solid' d='M0 0h3v3H0zM9 0h3v3H9zM0 8h3v3H0zM9 8h3v3H9z' /></Icon>
                    <Icon w={11} h={12}><path d='M3.6 5V.6h4l2.8 3v7.8H7' /><path className='solid' d='M0 5h6v7H0z' /></Icon>
                  </FilterIcons>
                  <Toggle aria-label='图层过滤开关' />
                </LayerBar>
                <LayerBar $h={29} $top={2}>
                  <Select label='混合模式' options={['正常', '溶解']} $w={118} $h={23} $pad={8} />
                  <Push>不透明度:</Push>
                  <Combo label='不透明度' value='100%' w={55} />
                </LayerBar>
                <LayerBar $h={32} $last>
                  <span>锁定:</span>
                  <LockIcons>
                    <BareButton $dim aria-label='锁定透明像素'>
                      <Icon w={11} h={11}><path d='M.5.5h10v10H.5z' /><path className='solid' d='M2 1h2v2H2zM6 1h2v2H6zM4 3h2v2H4zM8 3h2v2H8zM2 5h2v2H2zM6 5h2v2H6zM4 7h2v2H4zM8 7h2v2H8z' /></Icon>
                    </BareButton>
                    <BareButton $dim aria-label='锁定图像像素'>
                      <Icon w={12} h={12}><g transform='scale(.8)'><BrushShape /></g></Icon>
                    </BareButton>
                    <BareButton aria-label='锁定位置'>
                      <Icon w={12} h={12}><g transform='scale(.75)'><MoveArrows /></g></Icon>
                    </BareButton>
                    <BareButton aria-label='防止自动嵌套'>
                      <Icon w={14} h={12}><path d='M2.5 0v12M0 2.5h9l2.5 2.5V12M0 9.5h14M8.5 2v3.5H12' strokeWidth='1' /></Icon>
                    </BareButton>
                    <BareButton aria-label='锁定全部'><FaLock size={12} /></BareButton>
                  </LockIcons>
                  <span>填充:</span>
                  <Combo label='填充' value='100%' w={55} />
                </LayerBar>
                <Scrolled>
                  <LayerList>
                    <Layer $h={41} $active>
                      <Eye aria-label='显示百度经验'><EyeIcon /></Eye>
                      <Icon w={62} h={37}>
                        <path d='M2.500 13V1h20M42 1h19.500v12M61.500 26v10.500H42M22.500 36.500h-20V26' stroke='#fff' strokeWidth='1' />
                        <path className='solid' d='M25 12h13v4h-1c-.3-2-.9-2.800-2.600-2.800h-2v10.800c0 1 .4 1.200 1.800 1.300v.7h-5.400v-.7c1.400-.1 1.800-.3 1.800-1.300V13.200h-2c-1.700 0-2.300.8-2.600 2.800h-1z' />
                      </Icon>
                      <LayerName>百度经验</LayerName>
                    </Layer>
                    <Layer $h={66}>
                      <Eye aria-label='显示背景'><EyeIcon /></Eye>
                      <ColorThumb />
                      <LayerName>背景</LayerName>
                      <Icon w={11} h={12}><path d='M.6 5.6h9.8v5.8H.6zM2.5 5V3.5a3 3 0 0 1 6 0V5' /><circle className='solid' cx='5.5' cy='8.5' r='1.2' /></Icon>
                    </Layer>
                  </LayerList>
                  <ListEdge />
                </Scrolled>
                <LayerFooter>
                  <FooterButton $dim aria-label='链接图层'><LinkIcon /></FooterButton>
                  <FooterButton $active aria-label='图层样式'><em>fx</em></FooterButton>
                  <FooterButton aria-label='图层蒙版'><Icon w={13} h={10}><path className='solid' d='M0 0h13v10H0z' /><circle cx='6.5' cy='5' r='3' fill='#535353' /></Icon></FooterButton>
                  <FooterButton aria-label='调整图层'><Icon w={11} h={11}><circle cx='5.5' cy='5.5' r='4.9' /><path className='solid' d='M9 2A5 5 0 1 0 2 9z' /></Icon></FooterButton>
                  <FooterButton aria-label='新建组'><Icon w={13} h={10}><path className='solid' d='M0 0h5l1.5 2H13v8H0z' /></Icon></FooterButton>
                  <FooterButton aria-label='新建图层'><Icon w={12} h={12}><path d='M1 .6h10.4v10.8H6L1 6.5z' /><path className='solid' d='M1 6h5v5z' /></Icon></FooterButton>
                  <FooterButton aria-label='删除图层'><Icon w={11} h={13}><path d='M0 2.5h11M4 2V.6h3V2M1.5 3v9.4h8V3M4 4.5v6M7 4.5v6M5.5 4.5v6' /></Icon></FooterButton>
                </LayerFooter>
                <EffectMenu>
                  <EffectItem $first>混合选项...</EffectItem>
                  <EffectRule />
                  {effects.map((effect) => (
                    <EffectItem key={effect}>{effect}</EffectItem>
                  ))}
                </EffectMenu>
              </Panel>
            </Panels>
          </SideBody>
        </Side>
      </Workspace>

      <TaskBar><time>22:04</time></TaskBar>

      <Watermark>
        <WatermarkTop>
          <strong>Bai</strong>
          <Paw viewBox='0 0 100 110'>
            <ellipse cx='13' cy='41' rx='13' ry='16' />
            <ellipse cx='37' cy='17' rx='12' ry='17' />
            <ellipse cx='68' cy='19' rx='12' ry='16' transform='rotate(12 68 19)' />
            <ellipse cx='87' cy='48' rx='12' ry='16' />
            <path d='M50 44c9 0 15 7 21 15 8 11 21 16 21 31 0 12-9 18-20 17-8-1-14-2-22-2s-14 1-22 2C17 108 7 102 7 90c0-15 13-20 21-31 6-8 13-15 22-15z' />
            <text x='19' y='94'>du</text>
          </Paw>
          <b>经验</b>
        </WatermarkTop>
        <WatermarkUrl>jingyan.baidu.com</WatermarkUrl>
      </Watermark>
    </Screen>
  </>
);

export default App;
